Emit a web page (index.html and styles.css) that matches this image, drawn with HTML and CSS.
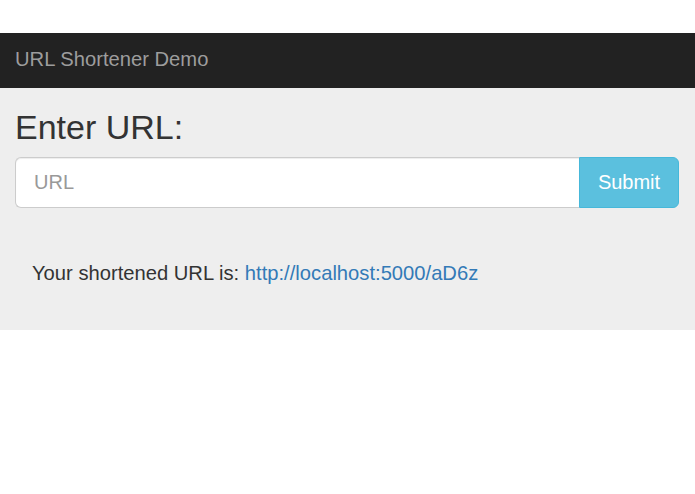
FILE: index.html
```html
<!DOCTYPE html>
<html lang="en">
<head>
    <meta charset="UTF-8">
    <meta name="viewport" content="width=device-width, initial-scale=1.0">
    <title>URL Shortener Demo</title>
    <link rel="stylesheet" href="styles.css">
</head>
<body>
    <nav class="navbar">
        <a class="navbar-brand" href="#">URL Shortener Demo</a>
    </nav>
    <div class="jumbotron">
        <h1>Enter URL:</h1>
        <form class="input-group">
            <input type="text" class="form-control" placeholder="URL">
            <button type="submit" class="btn-submit">Submit</button>
        </form>
        <p class="result">Your shortened URL is: <a href="http://localhost:5000/aD6z">http://localhost:5000/aD6z</a></p>
    </div>
</body>
</html>
```

FILE: styles.css
```css
body {
    font-family: "Liberation Sans", Arial, sans-serif;
    margin: 0;
    padding-top: 33px;
    background-color: #fff;
    color: #333;
}
.navbar {
    background-color: #222;
    height: 55px;
    display: flex;
    align-items: center;
    padding: 0 15px;
}
.navbar-brand {
    color: #9d9d9d;
    font-size: 20.2px;
    text-decoration: none;
    margin-top: -3px;
}
.jumbotron {
    background-color: #eee;
    padding: 20px 16px 42px 15px;
}
.jumbotron h1 {
    font-size: 34px;
    font-weight: normal;
    line-height: 39px;
    margin: 0 0 10px;
}
.input-group {
    display: flex;
    height: 51px;
}
.form-control {
    flex: 1;
    min-width: 0;
    box-sizing: border-box;
    height: 51px;
    padding: 0 18px;
    font-family: inherit;
    font-size: 20px;
    color: #555;
    background-color: #fff;
    border: 1px solid #ccc;
    border-right: none;
    border-radius: 6px 0 0 6px;
    box-shadow: inset 0 1px 1px rgba(0, 0, 0, 0.075);
    outline: none;
}
.form-control::placeholder {
    color: #999;
}
.btn-submit {
    width: 100px;
    height: 51px;
    font-family: inherit;
    font-size: 20px;
    color: #fff;
    background-color: #5bc0de;
    border: 1px solid #46b8da;
    border-radius: 0 6px 6px 0;
    cursor: pointer;
}
.result {
    font-size: 20.2px;
    margin: 50px 0 0 17px;
    line-height: 30px;
}
.result a {
    color: #337ab7;
    text-decoration: none;
}
```
